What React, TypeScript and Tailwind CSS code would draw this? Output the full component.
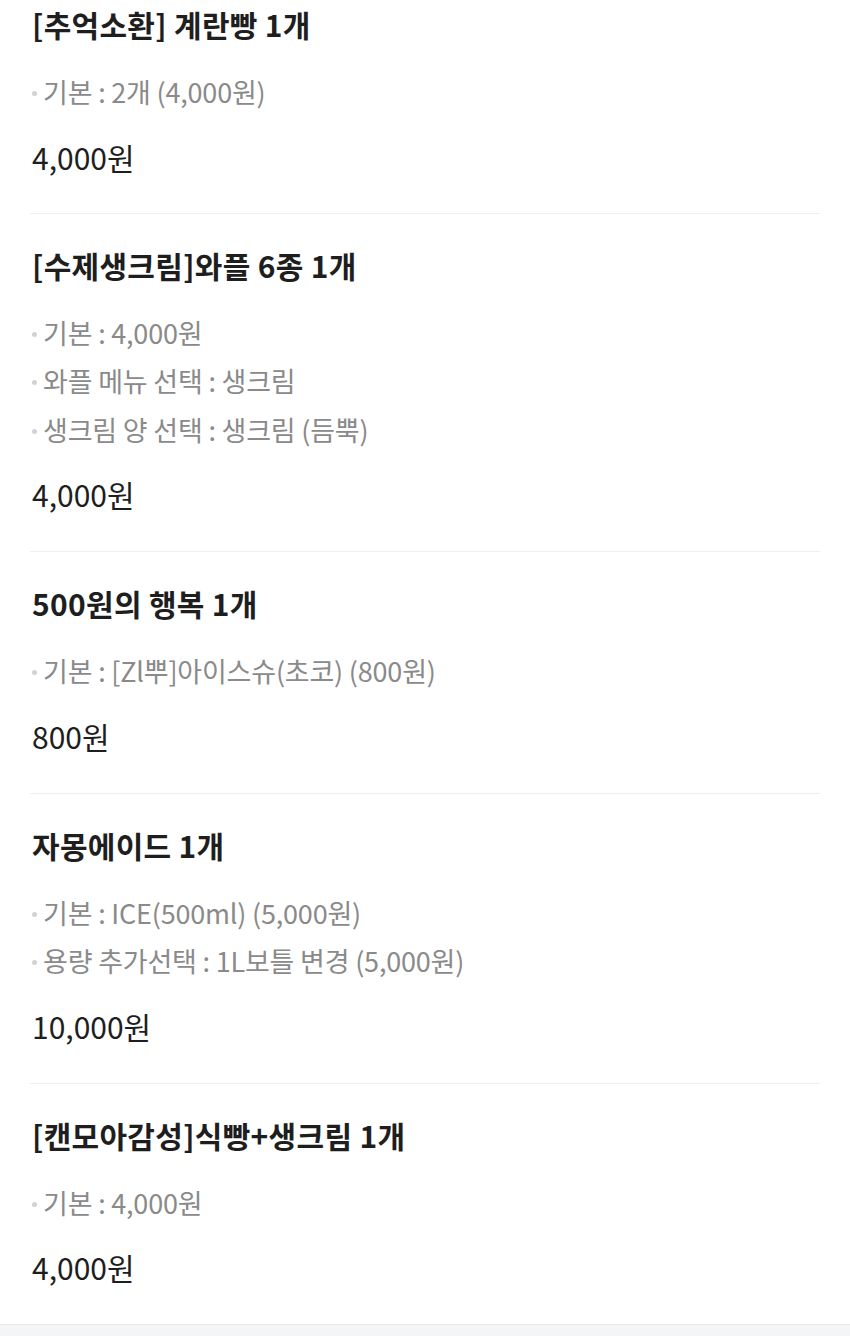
import React from 'react';

type Item = {
  title: string;
  options: string[];
  price: string;
};

const items: Item[] = [
  { title: '[추억소환] 계란빵 1개', options: ['기본 : 2개 (4,000원)'], price: '4,000원' },
  {
    title: '[수제생크림]와플 6종 1개',
    options: ['기본 : 4,000원', '와플 메뉴 선택 : 생크림', '생크림 양 선택 : 생크림 (듬뿍)'],
    price: '4,000원',
  },
  { title: '500원의 행복 1개', options: ['기본 : [Zl뿌]아이스슈(초코) (800원)'], price: '800원' },
  {
    title: '자몽에이드 1개',
    options: ['기본 : ICE(500ml) (5,000원)', '용량 추가선택 : 1L보틀 변경 (5,000원)'],
    price: '10,000원',
  },
  { title: '[캔모아감성]식빵+생크림 1개', options: ['기본 : 4,000원'], price: '4,000원' },
];

const OrderItem = ({ item, first }: { item: Item; first: boolean }) => (
  <div className={first ? 'pt-[4px] pb-[36px]' : 'pt-[31px] pb-[37px] border-t border-[#eeeeee]'}>
    <h3 className="pl-[2px] text-[30px] leading-[40px] font-bold text-[#1e1e1e] tracking-[0.3px]">{item.title}</h3>
    <ul className="mt-[24px]">
      {item.options.map(opt => (
        <li key={opt} className="pl-[2px] flex items-center text-[27px] leading-[48.5px] text-[#8a8a8a] tracking-[-0.2px]">
          <span className="w-[5px] h-[5px] rounded-full bg-[#d2d2d2] mr-[6px] mt-[3px] shrink-0"></span>
          {opt}
        </li>
      ))}
    </ul>
    <div className="pl-[2px] mt-[20px] text-[30px] leading-[40px] text-[#1e1e1e]">{item.price}</div>
  </div>
);

const App = () => {
  return (
    <div
      className="w-[850px] h-[1336px] bg-white overflow-hidden flex flex-col"
      style={{ fontFamily: '"Noto Sans CJK KR", "Noto Sans", sans-serif' }}
    >
      <div className="flex-1 px-[30px]">
        {items.map((item, i) => (
          <OrderItem key={item.title} item={item} first={i === 0} />
        ))}
      </div>
      <div className="h-[12px] bg-[#f4f5f7] border-t border-[#e8e9eb] shrink-0"></div>
    </div>
  );
};

export default App;
